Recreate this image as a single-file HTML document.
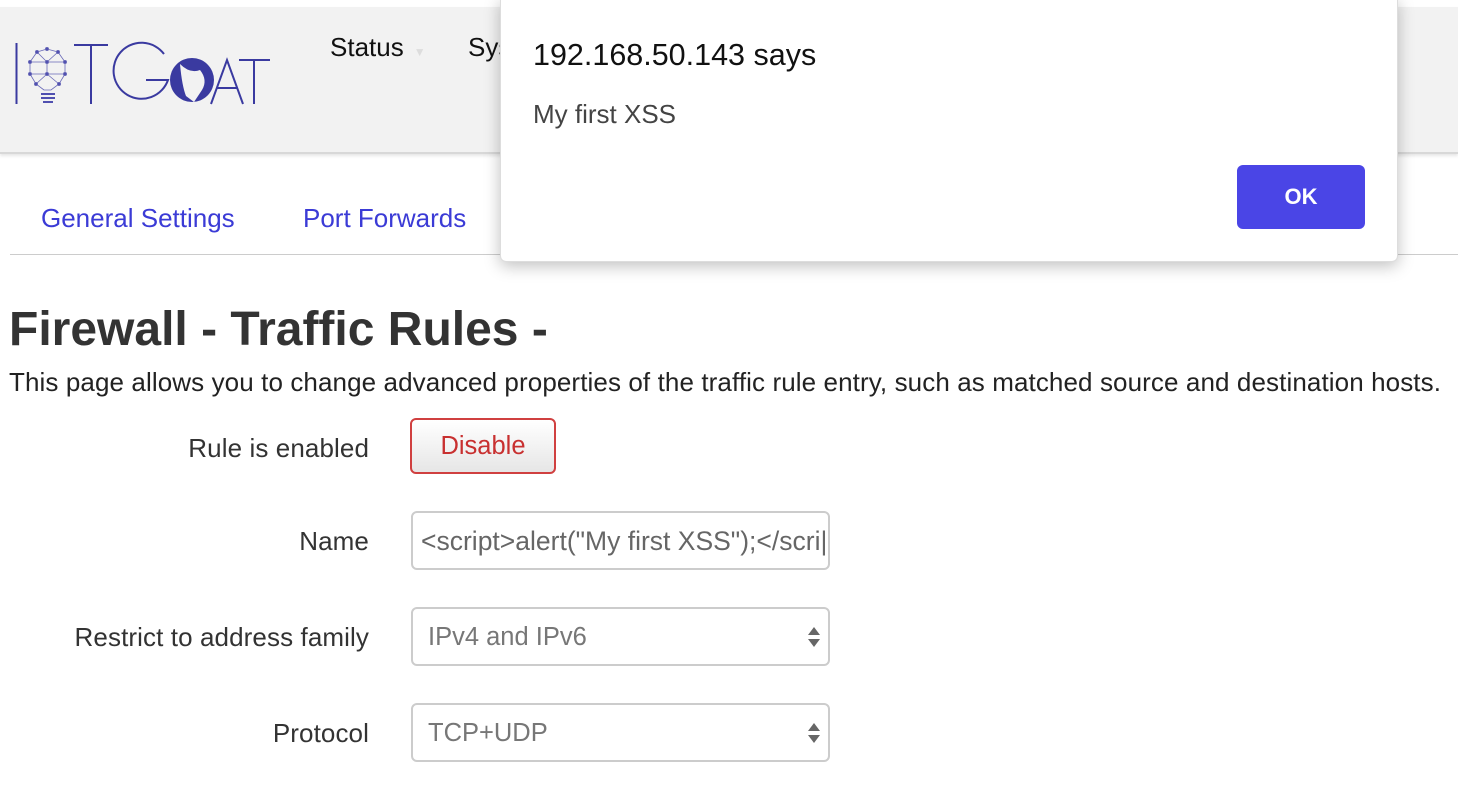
<!DOCTYPE html>
<html><head><style>
body{margin:0;width:1458px;height:798px;overflow:hidden;background:#fff;font-family:"Liberation Sans",Arial,sans-serif;position:relative}
.hdr{position:absolute;left:0;top:7px;width:1458px;height:145px;background:#f2f2f2;border-bottom:2px solid #d8d8d8;box-shadow:0 2px 3px rgba(0,0,0,.1)}
.nav{position:absolute;top:32px;font-size:26px;color:#111}
.tab{position:absolute;top:203px;font-size:26px;color:#3b3bd6}
.line{position:absolute;left:10px;top:254px;width:1448px;height:1px;background:#ccc}
h1{position:absolute;left:9px;top:302px;margin:0;font-size:48px;font-weight:bold;color:#333}
.desc{position:absolute;left:9px;top:367px;font-size:26px;letter-spacing:0.1px;color:#222;white-space:nowrap}
.lbl{position:absolute;right:1089px;font-size:26px;letter-spacing:0.1px;color:#333;white-space:nowrap}
.box{position:absolute;left:411px;width:419px;height:59px;border:2px solid #ccc;border-radius:6px;background:#fff;font-size:25.5px;color:#777;box-sizing:border-box;padding-left:15px;line-height:56px;overflow:hidden;white-space:nowrap}
.arr{position:absolute;right:8px;top:18px;width:12px}
.dlg{position:absolute;left:500px;top:-2px;width:896px;height:262px;background:#fff;border:1px solid #ddd;border-radius:0 0 6px 6px;box-shadow:0 4px 16px rgba(0,0,0,.25)}
</style></head><body>
<div class="hdr"></div>
<svg style="position:absolute;left:14px;top:40px" width="260" height="70" viewBox="0 0 260 70">
<rect x="1.5" y="3" width="2" height="61" fill="#3a3aa0"/>
<g stroke="#6a6ab8" stroke-width="0.8" fill="#5050b0">
<path d="M30 50 L22 44 L16 34 L16 22 L23 12 L33 9 L44 12 L51 22 L51 34 L45 44 L37 50 Z M23 12 L33 22 L44 12 M16 22 L33 22 L51 22 M16 34 L33 34 L51 34 M33 22 L33 34 L22 44 M33 34 L45 44" fill="none"/>
<circle cx="22" cy="44" r="1.6"/><circle cx="16" cy="34" r="1.6"/><circle cx="16" cy="22" r="1.6"/><circle cx="23" cy="12" r="1.6"/><circle cx="33" cy="9" r="1.6"/><circle cx="44" cy="12" r="1.6"/><circle cx="51" cy="22" r="1.6"/><circle cx="51" cy="34" r="1.6"/><circle cx="45" cy="44" r="1.6"/><circle cx="33" cy="22" r="1.6"/><circle cx="33" cy="34" r="1.6"/>
</g>
<rect x="27" y="53" width="14" height="2" fill="#5050b0"/><rect x="27" y="57" width="14" height="2" fill="#5050b0"/><rect x="29" y="61" width="10" height="2" fill="#5050b0"/>
<path d="M60 5 H94 M77 5 V64" stroke="#3a3aa0" stroke-width="2" fill="none"/>
<path d="M150 14 A28 28 0 1 0 154 40 H132" stroke="#3a3aa0" stroke-width="2" fill="none"/>
<circle cx="178" cy="40" r="22" fill="#3a3aa0"/>
<path d="M166 24 Q176 34 186 30 Q194 40 188 50 L180 62 L172 56 Q168 46 166 24 Z" fill="#f2f2f2"/>
<path d="M197 64 L213 20 L229 64 M203 48 H224 M225 20 H256 M240 20 V64" stroke="#3a3aa0" stroke-width="2" fill="none"/>
</svg>
<div class="nav" style="left:330px">Status<span style="color:#ddd;font-size:12px;margin-left:10px">▼</span></div>
<div class="nav" style="left:468px">Sys</div>
<div class="tab" style="left:41px">General Settings</div>
<div class="tab" style="left:303px">Port Forwards</div>
<div class="line"></div>
<h1>Firewall - Traffic Rules -</h1>
<div class="desc">This page allows you to change advanced properties of the traffic rule entry, such as matched source and destination hosts.</div>
<div class="lbl" style="top:433px">Rule is enabled</div>
<div style="position:absolute;left:410px;top:418px;width:146px;height:56px;box-sizing:border-box;border:2px solid #d04040;border-radius:6px;background:linear-gradient(#fff,#e6e6e6);color:#c83030;font-size:25.5px;text-align:center;line-height:52px">Disable</div>
<div class="lbl" style="top:526px">Name</div>
<div class="box" style="top:511px;padding-left:8px;color:#666;font-size:26.5px">&lt;script&gt;alert("My first XSS");&lt;/scri|</div>
<div class="lbl" style="top:622px">Restrict to address family</div>
<div class="box" style="top:607px">IPv4 and IPv6<svg class="arr" width="12" height="20" viewBox="0 0 12 20"><path d="M6 0 L12 8 H0Z M0 12 H12 L6 20Z" fill="#666"/></svg></div>
<div class="lbl" style="top:718px">Protocol</div>
<div class="box" style="top:703px">TCP+UDP<svg class="arr" width="12" height="20" viewBox="0 0 12 20"><path d="M6 0 L12 8 H0Z M0 12 H12 L6 20Z" fill="#666"/></svg></div>
<div class="dlg">
<div style="position:absolute;left:32px;top:39px;font-size:30.5px;color:#111">192.168.50.143 says</div>
<div style="position:absolute;left:32px;top:100px;font-size:26px;color:#444">My first XSS</div>
<div style="position:absolute;left:736px;top:166px;width:128px;height:64px;background:#4a45e6;border-radius:6px;color:#fff;font-size:22px;font-weight:bold;text-align:center;line-height:64px">OK</div>
</div>
</body></html>
